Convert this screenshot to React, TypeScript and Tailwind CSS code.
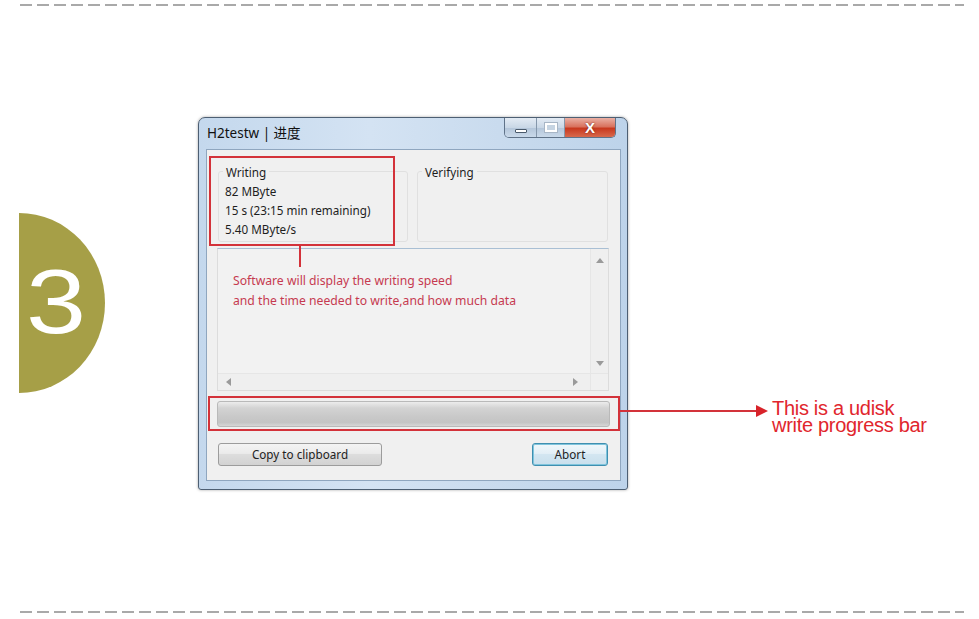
import React from "react";

function Dashes({ className }: { className: string }) {
  return (
    <div
      className={
        "h-[2px] w-[944px] ml-[20px] bg-[repeating-linear-gradient(90deg,#a9a9a9_0px,#a9a9a9_12px,transparent_12px,transparent_17px)] " +
        className
      }
    />
  );
}

function TitleButtons() {
  return (
    <div className="ml-auto mr-[11px] self-start flex h-[20px] rounded-b-[5px] border border-t-0 border-[#5f7288] overflow-hidden">
      <div className="w-[32px] h-full bg-[linear-gradient(#e3ebf4,#c9d7e6_50%,#b3c5d9_51%,#c9d9ea)] border-r border-[#8597ab] flex items-end justify-center pb-[4px]">
        <div className="w-[12px] h-[4px] bg-white border border-[#4a5a6c] rounded-[1px]" />
      </div>
      <div className="w-[28px] h-full bg-[linear-gradient(#e3ebf4,#c9d7e6_50%,#b3c5d9_51%,#c9d9ea)] border-r border-[#8597ab] flex items-center justify-center">
        <div className="w-[12px] h-[9px] border-2 border-white outline outline-1 outline-[#a8b6c6] bg-[#c6d4e2]" />
      </div>
      <div className="w-[50px] h-full bg-[linear-gradient(#eab0a4,#d9735f_45%,#c8391f_55%,#d8694c)] flex items-center justify-center">
        <span className="text-white text-[15px] font-bold leading-none font-['Liberation_Sans',sans-serif] [text-shadow:0_0_2px_#6b1d10]">
          X
        </span>
      </div>
    </div>
  );
}

function UpArrow() {
  return (
    <svg width="8" height="5" viewBox="0 0 8 5">
      <path d="M0 5 L4 0 L8 5 Z" fill="#9a9a9a" />
    </svg>
  );
}
function DownArrow() {
  return (
    <svg width="8" height="5" viewBox="0 0 8 5">
      <path d="M0 0 L4 5 L8 0 Z" fill="#9a9a9a" />
    </svg>
  );
}
function LeftArrow() {
  return (
    <svg width="5" height="8" viewBox="0 0 5 8">
      <path d="M5 0 L0 4 L5 8 Z" fill="#9a9a9a" />
    </svg>
  );
}
function RightArrow() {
  return (
    <svg width="5" height="8" viewBox="0 0 5 8">
      <path d="M0 0 L5 4 L0 8 Z" fill="#9a9a9a" />
    </svg>
  );
}

function Window() {
  return (
    <div className="ml-[93px] w-[430px] h-[373px] flex flex-col border border-[#4d5f73] rounded-t-[7px] rounded-b-[3px] bg-[linear-gradient(90deg,#c4d8ed,#d4e3f3_40%,#c9dbee_70%,#bdd3ea)] shadow-[0_0_3px_rgba(0,0,0,0.35)]">
      {/* title bar */}
      <div className="h-[31px] flex items-center">
        <span className="ml-[8px] mt-[1px] text-[13.5px] text-[#111] leading-none">H2testw | 进度</span>
        <TitleButtons />
      </div>
      {/* client */}
      <div className="ml-[7px] w-[415px] h-[332px] border border-[#8fa6bf] bg-[#f0f0f0] flex flex-col text-[#1e1e1e]">
        {/* groups */}
        <div className="flex mt-[21px] ml-[11px]">
          <div className="relative w-[190px] h-[71px] border border-[#e0e0e0] rounded-[3px]">
            <span className="absolute -top-[9px] left-[4px] px-[3px] bg-[#f0f0f0] text-[11.7px] leading-[18px]">
              Writing
            </span>
            <div className="pt-[10px] pl-[6px] text-[11.7px] leading-[19px]">
              <div>82 MByte</div>
              <div>15 s (23:15 min remaining)</div>
              <div>5.40 MByte/s</div>
            </div>
            <div className="absolute -left-[10px] -top-[16px] w-[186px] h-[90px] border-2 border-[#d3323a]">
              <div className="absolute left-[88px] top-[88px] w-[2px] h-[21px] bg-[#d3323a]" />
            </div>
          </div>
          <div className="relative ml-[9px] w-[191px] h-[71px] border border-[#e0e0e0] rounded-[3px]">
            <span className="absolute -top-[9px] left-[4px] px-[3px] bg-[#f0f0f0] text-[11.7px] leading-[18px]">
              Verifying
            </span>
          </div>
        </div>
        {/* log area */}
        <div className="mt-[6px] ml-[10px] w-[392px] h-[143px] border border-[#dcdcdc] border-t-[#a9bfd4] bg-[#f2f2f2] flex flex-col">
          <div className="flex flex-1">
            <div className="flex-1 pt-[22px] pl-[15px] text-[12.2px] leading-[20px] text-[#c63a50]">
              <div>Software will display the writing speed</div>
              <div>and the time needed to write,and how much data</div>
            </div>
            <div className="w-[18px] border-l border-[#e6e6e6] bg-[#efefef] flex flex-col items-center justify-between pt-[9px] pb-[7px]">
              <UpArrow />
              <DownArrow />
            </div>
          </div>
          <div className="h-[17px] flex border-t border-[#e6e6e6]">
            <div className="flex-1 bg-[#efefef] flex items-center justify-between pl-[8px] pr-[12px]">
              <LeftArrow />
              <RightArrow />
            </div>
            <div className="w-[18px] bg-[#f0f0f0] border-l border-[#e6e6e6]" />
          </div>
        </div>
        {/* progress */}
        <div className="relative mt-[5px] ml-[1px] w-[412px] h-[35px] border-2 border-[#d3323a]">
          <div className="mt-[3px] ml-[7px] w-[393px] h-[26px] rounded-[3px] border border-[#b9b9b9] bg-[linear-gradient(#ececec,#d3d3d3_25%,#c9c9c9_60%,#c4c4c4_85%,#d6d6d6)]" />
          <div className="absolute left-[410px] top-[4px] flex items-start">
            <div className="mt-[8px] w-[137px] h-[2px] bg-[#d3323a]" />
            <svg width="12" height="12" viewBox="0 0 12 12" className="mt-[3px] -ml-[1px]">
              <path d="M0 0 L12 6 L0 12 Z" fill="#d8232a" />
            </svg>
            <div className="ml-[4px] -mt-[2px] font-['Liberation_Sans',sans-serif] text-[20px] leading-[17px] text-[#e1262d] whitespace-nowrap tracking-[-0.3px]">
              <div>This is a udisk</div>
              <div>write progress bar</div>
            </div>
          </div>
        </div>
        {/* buttons */}
        <div className="flex mt-[12px]">
          <div className="ml-[11px] w-[164px] h-[23px] rounded-[3px] border border-[#9c9c9c] bg-[linear-gradient(#f4f4f4,#ebebeb_45%,#dddddd_50%,#d2d2d2)] flex items-center justify-center text-[11.7px] text-[#222]">
            Copy to clipboard
          </div>
          <div className="ml-auto mr-[12px] w-[76px] h-[23px] rounded-[3px] border border-[#3f8fb0] shadow-[inset_0_0_0_1px_#7fc4dc] bg-[linear-gradient(#f0f7fb,#e3eff6_45%,#d3e6f1_50%,#c9dfec)] flex items-center justify-center text-[11.7px] text-[#222]">
            Abort
          </div>
        </div>
      </div>
    </div>
  );
}

export default function App() {
  return (
    <div className="w-[979px] h-[619px] bg-white relative overflow-hidden flex flex-col font-['Noto_Sans','Noto_Sans_CJK_SC',sans-serif]">
      <Dashes className="mt-[4px]" />
      <div className="flex mt-[111px]">
        <div className="mt-[96px] ml-[19px] w-[86px] h-[180px] bg-[#a69f47] rounded-tr-[86px_90px] rounded-br-[86px_90px] flex items-center">
          <span className="ml-[7px] mb-[2px] text-white text-[90px] leading-none font-['Liberation_Sans',sans-serif] scale-x-[1.2] origin-left">
            3
          </span>
        </div>
        <Window />
      </div>
      <Dashes className="mt-auto mb-[6px]" />
    </div>
  );
}
